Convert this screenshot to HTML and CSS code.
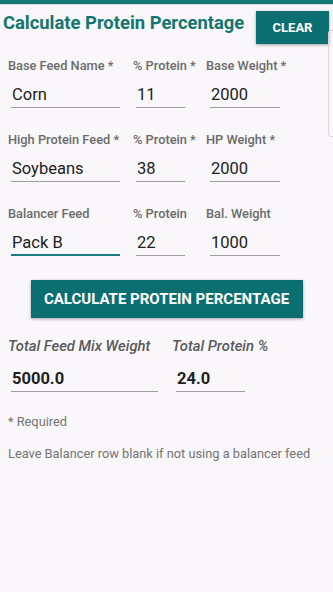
FILE: index.html
```html
<!DOCTYPE html>
<html>
<head>
<meta charset="utf-8">
<link rel="stylesheet" href="styles.css">
</head>
<body>
<div class="topbar"></div>
<div class="scrollhint"></div>
<header class="header">
  <h1 class="title">Calculate Protein Percentage</h1>
  <button class="clear">CLEAR</button>
</header>
<main class="form">
  <div class="row">
    <div class="field f1"><div class="label">Base Feed Name *</div><div class="input">Corn</div></div>
    <div class="field f2"><div class="label">% Protein *</div><div class="input">11</div></div>
    <div class="field f3"><div class="label">Base Weight *</div><div class="input">2000</div></div>
  </div>
  <div class="row">
    <div class="field f1"><div class="label">High Protein Feed *</div><div class="input">Soybeans</div></div>
    <div class="field f2"><div class="label">% Protein *</div><div class="input">38</div></div>
    <div class="field f3"><div class="label">HP Weight *</div><div class="input">2000</div></div>
  </div>
  <div class="row">
    <div class="field f1"><div class="label">Balancer Feed</div><div class="input focused">Pack B</div></div>
    <div class="field f2"><div class="label">% Protein</div><div class="input">22</div></div>
    <div class="field f3"><div class="label">Bal. Weight</div><div class="input">1000</div></div>
  </div>
  <div class="calc-wrap"><button class="calc">CALCULATE PROTEIN PERCENTAGE</button></div>
  <div class="totals">
    <div class="total t1"><div class="tlabel">Total Feed Mix Weight</div><div class="tvalue">5000.0</div></div>
    <div class="total t2"><div class="tlabel">Total Protein %</div><div class="tvalue">24.0</div></div>
  </div>
  <p class="note req">* Required</p>
  <p class="note">Leave Balancer row blank if not using a balancer feed</p>
</main>
</body>
</html>
```
FILE: styles.css
```css
html, body {
  margin: 0;
  padding: 0;
}
body {
  background: #f9f7fa;
  font-family: Roboto, "Liberation Sans", sans-serif;
  width: 333px;
  height: 592px;
  overflow: hidden;
  position: relative;
}
.topbar {
  height: 4px;
  background: #167a76;
  border-bottom: 1px solid #d6dcdc;
}
.scrollhint {
  position: absolute;
  left: 328px;
  top: 30px;
  width: 8px;
  height: 105px;
  border: 1px solid #d8d8d8;
  border-radius: 3px;
}
.header {
  display: flex;
  justify-content: space-between;
  align-items: flex-start;
  padding: 0 4px 0 3px;
}
.title {
  margin: 6px 0 0 0;
  font-size: 18.4px;
  line-height: 24px;
  font-weight: 700;
  color: #12766f;
  white-space: nowrap;
}
.clear {
  margin-top: 6px;
  width: 73px;
  height: 33px;
  border: none;
  background: #0b6f72;
  color: #fff;
  font-family: Roboto, "Liberation Sans", sans-serif;
  font-weight: 700;
  font-size: 13px;
  box-shadow: 0 1px 3px rgba(0,0,0,0.35);
  padding: 0;
}
.form {
  padding: 14px 0 0 8px;
}
.row {
  display: grid;
  grid-template-columns: 125px 73px 1fr;
  margin-bottom: 24px;
}
.label {
  font-size: 12.8px;
  line-height: 16px;
  font-weight: 500;
  color: #6b6b6b;
  white-space: nowrap;
}
.input {
  margin-top: 8px;
  height: 25px;
  line-height: 25px;
  font-size: 16.5px;
  color: #212121;
  border-bottom: 1px solid #9e9e9e;
  padding-left: 1px;
}
.f1 .input { margin-left: 3px; width: 108px; }
.f2 .input { margin-left: 3px; width: 48px; }
.f3 .input { margin-left: 4px; width: 69px; }
.input.focused {
  border-bottom: 2px solid #1f7c82;
  height: 24px;
}
.calc-wrap {
  display: flex;
  justify-content: center;
  padding-right: 8px;
}
.calc {
  width: 272px;
  height: 38px;
  border: none;
  background: #0b6f72;
  color: #fff;
  font-family: Roboto, "Liberation Sans", sans-serif;
  font-weight: 700;
  font-size: 15px;
  box-shadow: 0 1px 3px rgba(0,0,0,0.35);
  padding: 0;
}
.totals {
  display: grid;
  grid-template-columns: 164px 1fr;
  margin-top: 19px;
}
.tlabel {
  font-size: 14.8px;
  line-height: 18px;
  font-style: italic;
  font-weight: 500;
  color: #5a5a5a;
  white-space: nowrap;
}
.tvalue {
  margin-top: 11px;
  margin-left: 3px;
  height: 25px;
  line-height: 25px;
  font-size: 16.5px;
  font-weight: 700;
  color: #1f1f1f;
  border-bottom: 1px solid #9e9e9e;
  padding-left: 1px;
}
.t1 .tvalue { width: 146px; }
.t2 .tvalue { margin-left: 4px; width: 68px; }
.note {
  margin: 0;
  font-size: 12.8px;
  line-height: 16px;
  color: #747474;
}
.req {
  margin-top: 22px;
}
.note + .note {
  margin-top: 16px;
}
```
